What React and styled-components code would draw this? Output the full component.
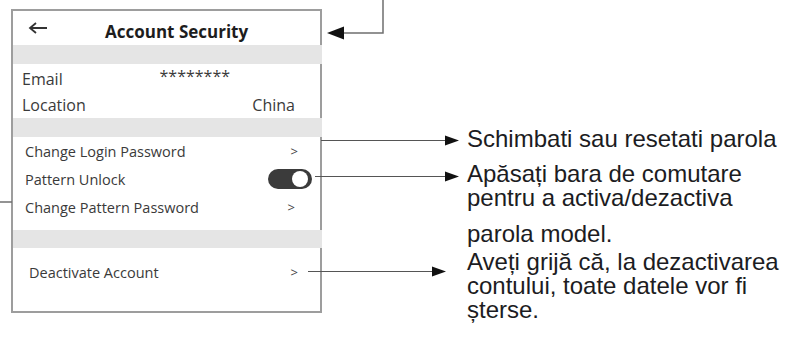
import styled, { createGlobalStyle } from "styled-components";

const GlobalStyle = createGlobalStyle`
  html, body { margin: 0; padding: 0; background: #ffffff; }
  body { width: 790px; height: 338px; overflow: hidden; }
`;

const Page = styled.div`
  position: relative;
  display: flex;
  align-items: flex-start;
  width: 790px;
  height: 338px;
`;

const Phone = styled.div`
  margin: 9px 0 0 11px;
  width: 307px;
  border: 2px solid #9d9d9d;
  background: #fff;
  font-family: "Open Sans", sans-serif;
  color: #3a3a3a;
`;

const Header = styled.div`
  display: flex;
  align-items: center;
  height: 34px;
  padding: 6px 0 0 15px;
  box-sizing: border-box;
`;

const Back = styled.svg`
  margin-top: -6px;
`;

const Title = styled.div`
  margin-left: 57px;
  font-size: 17px;
  font-weight: 700;
  color: #1d1d1d;
`;

const Band = styled.div`
  height: ${(p) => p.$h}px;
  margin-right: -2px;
  background: #e5e5e5;
`;

const InfoList = styled.div`
  padding-top: 2px;
`;

const InfoRow = styled.div`
  display: flex;
  align-items: center;
  justify-content: space-between;
  height: 26px;
  padding: 0 25px 0 9px;
  font-size: 16px;
`;

const Value = styled.span`
  margin-right: ${(p) => p.$offset || 0}px;
  transform: translateY(${(p) => p.$lift || 0}px);
`;

const MenuList = styled.div`
  padding-bottom: ${(p) => p.$bottom}px;
`;

const MenuRow = styled.div`
  display: flex;
  align-items: center;
  justify-content: space-between;
  height: ${(p) => p.$h || 28}px;
  padding: 0 22px 0 ${(p) => p.$indent || 12}px;
  font-size: 14.5px;
`;

const Chevron = styled.span`
  font-size: 13px;
  color: #444;
  margin-right: ${(p) => p.$shift || 0}px;
`;

const Toggle = styled.span`
  position: relative;
  width: 44px;
  height: 20px;
  margin-right: -14px;
  border-radius: 10px;
  background: #3b3b3b;
`;

const Knob = styled.span`
  position: absolute;
  top: 2px;
  right: 4px;
  width: 16px;
  height: 16px;
  border-radius: 50%;
  background: #fff;
`;

const Notes = styled.div`
  margin-left: 145px;
  padding-top: 127px;
  font-family: "Liberation Sans", Arial, sans-serif;
  font-size: 24px;
  line-height: 24px;
  color: #1c1c22;
`;

const Note = styled.div`
  margin-top: ${(p) => p.$gap || 0}px;
`;

const Line = styled.div`
  margin-top: ${(p) => p.$gap || 0}px;
  white-space: nowrap;
`;

const Leaders = styled.svg`
  position: absolute;
  left: 0;
  top: 0;
  pointer-events: none;
`;

const BackArrow = () => (
  <Back width="20" height="12" viewBox="0 0 20 12" fill="none">
    <path d="M19 6H2M8 1L2 6l6 5" stroke="#333" strokeWidth="1.8" />
  </Back>
);

const App = () => {
  return (
    <Page>
      <GlobalStyle />
      <Phone>
        <Header>
          <BackArrow />
          <Title>Account Security</Title>
        </Header>
        <Band $h={19} />
        <InfoList>
          <InfoRow>
            <span>Email</span>
            <Value $offset={65} $lift={-3}>********</Value>
          </InfoRow>
          <InfoRow>
            <span>Location</span>
            <Value>China</Value>
          </InfoRow>
        </InfoList>
        <Band $h={19} />
        <MenuList $bottom={9}>
          <MenuRow>
            <span>Change Login Password</span>
            <Chevron>&gt;</Chevron>
          </MenuRow>
          <MenuRow>
            <span>Pattern Unlock</span>
            <Toggle>
              <Knob />
            </Toggle>
          </MenuRow>
          <MenuRow>
            <span>Change Pattern Password</span>
            <Chevron $shift={3}>&gt;</Chevron>
          </MenuRow>
        </MenuList>
        <Band $h={18} />
        <MenuList $bottom={15}>
          <MenuRow $h={48} $indent={16}>
            <span>Deactivate Account</span>
            <Chevron>&gt;</Chevron>
          </MenuRow>
        </MenuList>
      </Phone>
      <Notes>
        <Note>
          <Line>Schimbati sau resetati parola</Line>
        </Note>
        <Note $gap={11}>
          <Line>Apăsați bara de comutare</Line>
          <Line>pentru a activa/dezactiva</Line>
          <Line $gap={12}>parola model.</Line>
        </Note>
        <Note $gap={4}>
          <Line>Aveți grijă că, la dezactivarea</Line>
          <Line>contului, toate datele vor fi</Line>
          <Line>șterse.</Line>
        </Note>
      </Notes>
      <Leaders width="790" height="338" viewBox="0 0 790 338">
        <g stroke="#6f6f6f" strokeWidth="1.5" fill="none">
          <path d="M342 33H383V0" />
          <path d="M0 202H12" />
        </g>
        <g stroke="#555" strokeWidth="1" fill="none">
          <path d="M321 140.5H446" />
          <path d="M315 176.5H446" />
          <path d="M308 271.5H433" />
        </g>
        <g fill="#111">
          <path d="M327 33L344 26.5V39.5Z" />
          <path d="M445 135.5L459 140.5L445 145.5Z" />
          <path d="M445 171.5L459 176.5L445 181.5Z" />
          <path d="M432 266.5L446 271.5L432 276.5Z" />
        </g>
      </Leaders>
    </Page>
  );
};

export default App;
